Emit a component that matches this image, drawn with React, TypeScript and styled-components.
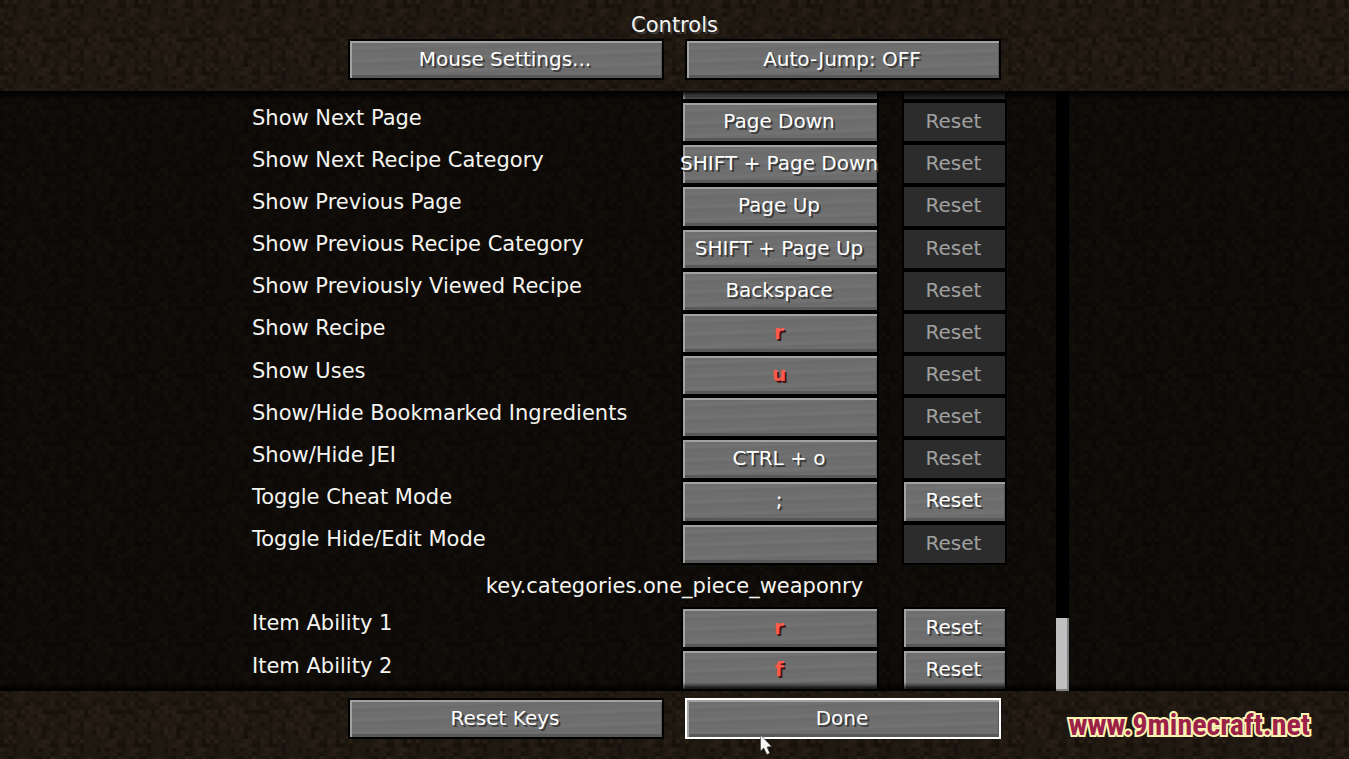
import React from 'react';
import styled, { createGlobalStyle, css } from 'styled-components';

const GlobalStyle = createGlobalStyle`
  *, *::before, *::after { box-sizing: border-box; }
  body {
    margin: 0;
    background: #1e1710;
    color: #f4f4f0;
    font-family: "DejaVu Sans", sans-serif;
    font-size: 21px;
    line-height: 24px;
  }
`;

const Screen = styled.div`
  position: relative;
  isolation: isolate;
  display: flex;
  flex-direction: column;
  height: 100vh;
  overflow: hidden;
`;

const Texture = styled.svg`
  position: absolute;
  inset: 0;
  z-index: -1;
  width: 100%;
  height: 100%;
`;

const Header = styled.header`
  display: flex;
  flex-direction: column;
  align-items: center;
  gap: 2px;
  padding: 13px 16px 11px;
`;

const Title = styled.h1`
  margin: 0;
  font-size: 21px;
  font-weight: 400;
  line-height: 24px;
  text-shadow: 2px 2px #3f3f3f;
`;

const ButtonPair = styled.div`
  display: flex;
  justify-content: center;
  gap: 21px;
`;

const Footer = styled.footer`
  position: relative;
  padding: 7px 16px 20px;
`;

const DoneSlot = styled.div`
  position: relative;
`;

type Tone = 'plain' | 'conflict';

const GameButton = styled.button<{ $width: number; $tone?: Tone; $focused?: boolean }>`
  flex: none;
  width: ${(p) => p.$width}px;
  min-height: 41px;
  padding: 0 2px 2px 0;
  border: 2px solid ${(p) => (p.$focused ? '#ffffff' : '#000000')};
  border-radius: 0;
  background:
    repeating-linear-gradient(178deg, #ffffff00 0 5px, #ffffff07 6px 8px, #00000007 10px 11px, #ffffff00 13px),
    #6e6e6e;
  box-shadow:
    inset 2px 2px #a2a2a2,
    inset -1px -3px #585858;
  color: #ffffff;
  font: inherit;
  font-size: 20px;
  white-space: nowrap;
  text-shadow: 2px 2px #3a3a3a;
  display: flex;
  align-items: center;
  justify-content: center;
  ${(p) =>
    p.$tone === 'conflict' &&
    css`
      color: #ff5a4c;
      font-weight: 700;
      text-shadow: 2px 2px #401515;
    `}
  &:disabled {
    background: #2c2c2c;
    box-shadow: none;
    color: #a0a0a0;
    text-shadow: none;
  }
`;

const ListPane = styled.main`
  position: relative;
  flex: 1;
  min-height: 0;
  display: flex;
  justify-content: center;
  overflow: hidden;
  background: rgba(0, 0, 0, 0.52);
  &::before,
  &::after {
    content: '';
    position: absolute;
    left: 0;
    right: 0;
    height: 9px;
    pointer-events: none;
  }
  &::before {
    top: 0;
    z-index: 1;
    background: linear-gradient(#000000, #00000000);
  }
  &::after {
    bottom: 0;
    background: linear-gradient(#00000000, #000000);
  }
`;

const ListBody = styled.div`
  position: relative;
  display: flex;
  width: 845px;
`;

const Bindings = styled.ul`
  flex: 1;
  display: flex;
  flex-direction: column;
  margin: -32px 0 0;
  padding: 0;
  list-style: none;
`;

const Row = styled.li`
  flex: 1 0 42px;
  display: flex;
  padding-right: 90px;
`;

const Category = styled.li`
  flex: 1 0 42px;
  display: flex;
  align-items: center;
  justify-content: center;
`;

const BindingName = styled.label`
  flex: 1;
  align-self: center;
  padding-bottom: 9px;
`;

const ResetSlot = styled.div`
  display: flex;
  margin-left: 23px;
`;

const Track = styled.div`
  position: absolute;
  top: 0;
  bottom: 0;
  right: 28px;
  z-index: 1;
  display: flex;
  align-items: flex-end;
  width: 13px;
  background: #000000;
`;

const Thumb = styled.div`
  width: 100%;
  height: 73px;
  border: solid #808080;
  border-width: 0 2px 2px 0;
  background: #c0c0c0;
`;

const Pointer = styled.svg`
  position: absolute;
  left: 74px;
  top: 36px;
  width: 14px;
  height: 22px;
  pointer-events: none;
`;

const Watermark = styled.a`
  position: absolute;
  right: 39px;
  bottom: 16px;
  color: #9c2148;
  font-family: "Roboto Condensed", Roboto, sans-serif;
  font-size: 30px;
  font-weight: 700;
  line-height: 36px;
  text-decoration: none;
  -webkit-text-stroke: 4px #fbf3b4;
  paint-order: stroke fill;
`;

const shades = ['#17110b', '#1b150e', '#1e1811', '#201912', '#231b13', '#271e15'];

function buildDirt() {
  let seed = 41;
  const cells: { x: number; y: number; fill: string }[] = [];
  for (let y = 0; y < 16; y++) {
    for (let x = 0; x < 16; x++) {
      seed = (seed * 1103515245 + 12345) % 2147483648;
      cells.push({ x, y, fill: shades[Math.floor((seed / 2147483648) * shades.length)] });
    }
  }
  return cells;
}

const dirt = buildDirt();

function DirtBackground() {
  return (
    <Texture aria-hidden="true">
      <defs>
        <pattern id="dirt" width="16" height="16" patternUnits="userSpaceOnUse" patternTransform="scale(4.2)">
          {dirt.map((c) => (
            <rect key={`${c.x}-${c.y}`} x={c.x} y={c.y} width="1.1" height="1.1" fill={c.fill} />
          ))}
        </pattern>
      </defs>
      <rect width="100%" height="100%" fill="url(#dirt)" />
    </Texture>
  );
}

interface Binding {
  id: string;
  name: string;
  keys: string;
  tone?: Tone;
  changed?: boolean;
}

const jeiBindings: Binding[] = [
  { id: 'scrolled', name: '', keys: '' },
  { id: 'next-page', name: 'Show Next Page', keys: 'Page Down' },
  { id: 'next-category', name: 'Show Next Recipe Category', keys: 'SHIFT + Page Down' },
  { id: 'prev-page', name: 'Show Previous Page', keys: 'Page Up' },
  { id: 'prev-category', name: 'Show Previous Recipe Category', keys: 'SHIFT + Page Up' },
  { id: 'prev-recipe', name: 'Show Previously Viewed Recipe', keys: 'Backspace' },
  { id: 'recipe', name: 'Show Recipe', keys: 'r', tone: 'conflict' },
  { id: 'uses', name: 'Show Uses', keys: 'u', tone: 'conflict' },
  { id: 'bookmarks', name: 'Show/Hide Bookmarked Ingredients', keys: '' },
  { id: 'jei', name: 'Show/Hide JEI', keys: 'CTRL + o' },
  { id: 'cheat', name: 'Toggle Cheat Mode', keys: ';', changed: true },
  { id: 'edit', name: 'Toggle Hide/Edit Mode', keys: '' },
];

const weaponBindings: Binding[] = [
  { id: 'ability-1', name: 'Item Ability 1', keys: 'r', tone: 'conflict', changed: true },
  { id: 'ability-2', name: 'Item Ability 2', keys: 'f', tone: 'conflict', changed: true },
];

function BindingRow({ id, name, keys, tone, changed }: Binding) {
  return (
    <Row>
      <BindingName htmlFor={id}>{name}</BindingName>
      <GameButton id={id} type="button" $width={198} $tone={tone}>
        {keys}
      </GameButton>
      <ResetSlot>
        <GameButton type="button" $width={105} disabled={!changed}>
          {name && 'Reset'}
        </GameButton>
      </ResetSlot>
    </Row>
  );
}

export default function App() {
  return (
    <Screen>
      <GlobalStyle />
      <DirtBackground />
      <Header>
        <Title>Controls</Title>
        <ButtonPair>
          <GameButton type="button" $width={316}>Mouse Settings...</GameButton>
          <GameButton type="button" $width={316}>Auto-Jump: OFF</GameButton>
        </ButtonPair>
      </Header>
      <ListPane>
        <ListBody>
          <Bindings>
            {jeiBindings.map((b) => (
              <BindingRow key={b.id} {...b} />
            ))}
            <Category>key.categories.one_piece_weaponry</Category>
            {weaponBindings.map((b) => (
              <BindingRow key={b.id} {...b} />
            ))}
          </Bindings>
          <Track>
            <Thumb />
          </Track>
        </ListBody>
      </ListPane>
      <Footer>
        <ButtonPair>
          <GameButton type="button" $width={316}>Reset Keys</GameButton>
          <DoneSlot>
            <GameButton type="button" $width={316} $focused>Done</GameButton>
            <Pointer viewBox="0 0 14 22" aria-hidden="true">
              <path
                d="M1.5 1 L1.5 17 L4.8 14 L7.8 20.6 L10.8 19.2 L8 13 L12.6 12.4 Z"
                fill="#f6f6f6"
                stroke="#2a2a2a"
                strokeWidth="0.5"
              />
            </Pointer>
          </DoneSlot>
        </ButtonPair>
        <Watermark href="#">www.9minecraft.net</Watermark>
      </Footer>
    </Screen>
  );
}
